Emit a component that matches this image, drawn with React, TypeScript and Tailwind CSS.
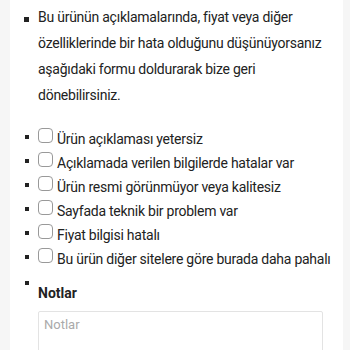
import React from "react";

const options = [
  "Ürün açıklaması yetersiz",
  "Açıklamada verilen bilgilerde hatalar var",
  "Ürün resmi görünmüyor veya kalitesiz",
  "Sayfada teknik bir problem var",
  "Fiyat bilgisi hatalı",
  "Bu ürün diğer sitelere göre burada daha pahalı",
];

export default function App() {
  return (
    <div className="w-[350px] h-[350px] bg-[#f6f6f6] overflow-hidden font-['Roboto',sans-serif] text-[#222]">
      <div className="ml-[10px] w-[333px] h-full bg-white pt-[4px] pl-[14px] pr-[8px]">
        <ul className="flex flex-col">
          <li className="flex">
            <span className="mt-[13px] w-[5px] h-[5px] bg-[#222] shrink-0" />
            <p className="ml-[9px] text-[14px] tracking-[-0.25px] leading-[26px] whitespace-nowrap">
              Bu ürünün açıklamalarında, fiyat veya diğer
              <br />
              özelliklerinde bir hata olduğunu düşünüyorsanız
              <br />
              aşağıdaki formu doldurarak bize geri
              <br />
              dönebilirsiniz.
            </p>
          </li>
        </ul>
        <ul className="mt-[19px] flex flex-col">
          {options.map((o) => (
            <li key={o} className="flex h-[24px]">
              <span className="mt-[8px] ml-[1px] w-[4px] h-[4px] bg-[#222] shrink-0" />
              <label className="ml-[9px] flex">
                <span className="mt-[1px] w-[15px] h-[15px] border border-[#999] rounded-[4px] shrink-0 bg-white" />
                <span className="ml-[4px] text-[14px] tracking-[-0.25px] leading-[24px] whitespace-nowrap">{o}</span>
              </label>
            </li>
          ))}
          <li className="flex mt-[10px]">
            <span className="ml-[1px] w-[4px] h-[4px] bg-[#222] shrink-0" />
            <div className="ml-[9px] flex flex-col">
              <label className="text-[14px] leading-[20px] font-bold mt-[2px]">Notlar</label>
              <textarea
                placeholder="Notlar"
                className="mt-[8px] w-[285px] h-[80px] border border-[#e3e3e3] rounded-[2px] px-[5px] pt-[4px] text-[13px] leading-[18px] placeholder:text-[#aaa] outline-none resize-none"
              />
            </div>
          </li>
        </ul>
      </div>
    </div>
  );
}
